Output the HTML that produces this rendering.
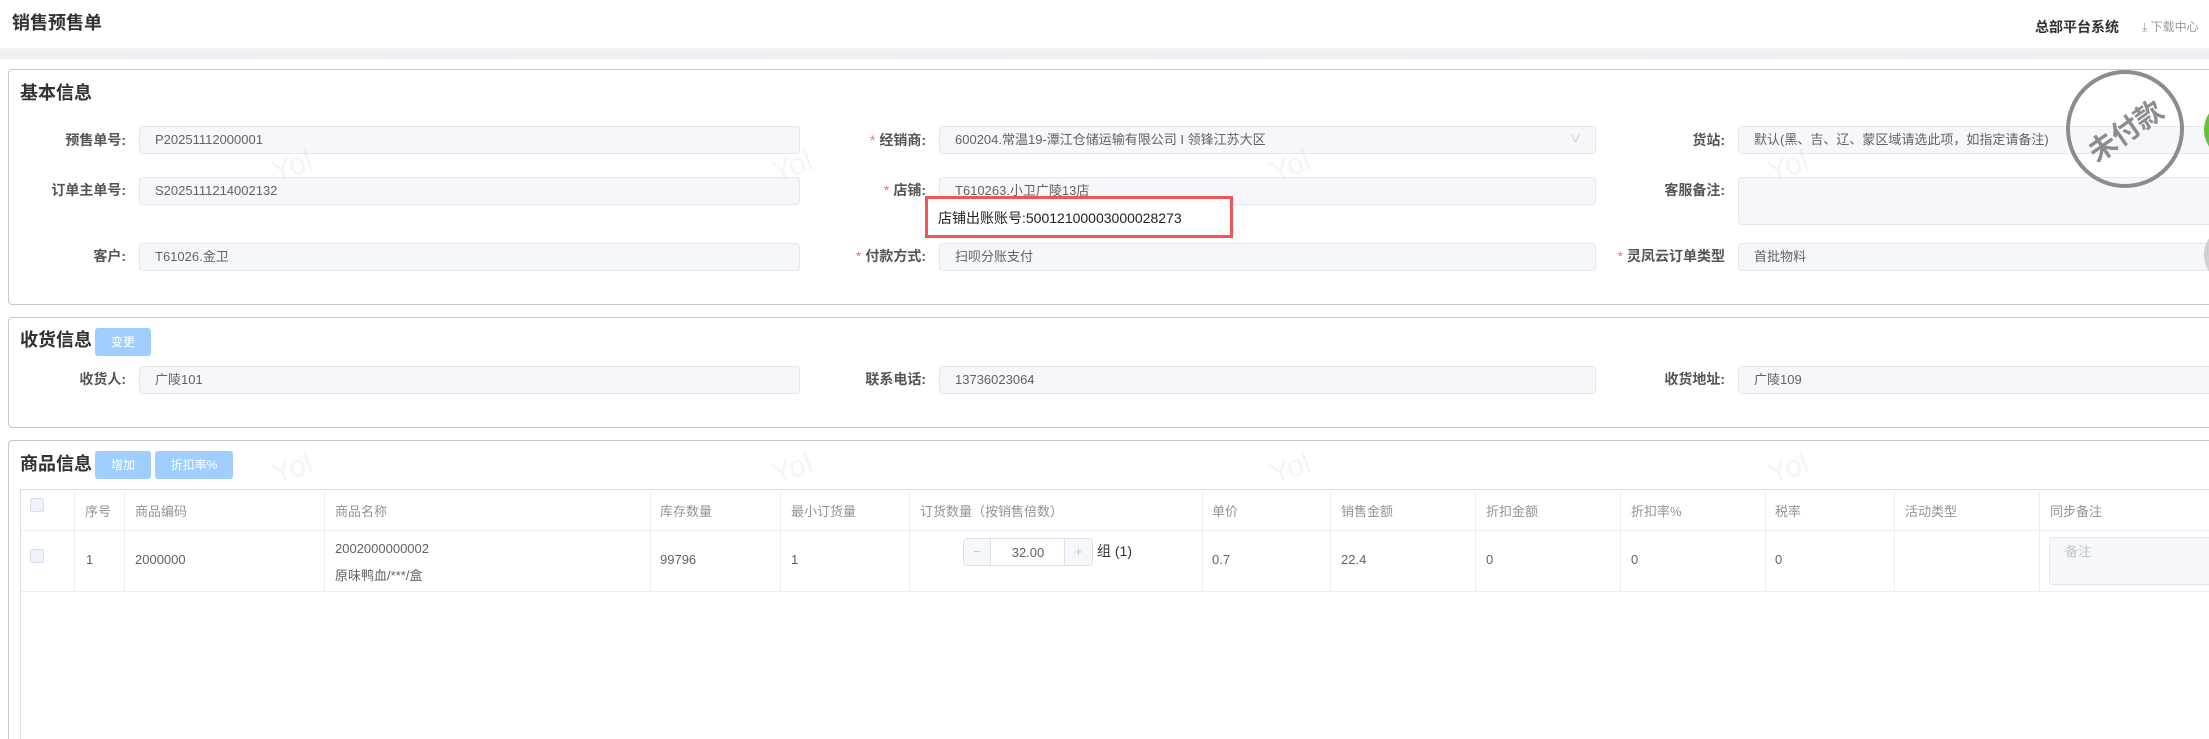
<!DOCTYPE html>
<html style="width:2209px;height:739px;overflow:hidden"><head><meta charset="utf-8"><style>
*{margin:0;padding:0;box-sizing:border-box}
body{width:2209px;height:739px;overflow:hidden;background:#fff;font-family:"Liberation Sans","Noto Sans CJK SC",sans-serif;position:relative;color:#606266}
.a{position:absolute;white-space:nowrap}
.lbl{position:absolute;font-size:14px;font-weight:bold;color:#555;text-align:right;width:200px;line-height:27px}
.lbl i{color:#f56c6c;font-style:normal;font-weight:normal;margin-right:4px}
.in{position:absolute;background:#f5f7fa;border:1px solid #e4e7ed;border-radius:4px;font-size:13px;color:#606266;padding-left:15px;line-height:25px;height:28px;white-space:nowrap;overflow:hidden}
.card{position:absolute;left:8px;width:2250px;border:1px solid #c8c8c8;border-radius:4px;background:#fff}
.h{position:absolute;font-size:18px;font-weight:bold;color:#303133;left:20px}
.btn{position:absolute;background:#a0cfff;color:#fff;font-size:12px;border-radius:3px;height:28px;line-height:28px;text-align:center}
.th{position:absolute;font-size:13px;color:#909399;top:501px}
.td{position:absolute;font-size:13px;color:#606266}
.vl{position:absolute;width:1px;background:#ebeef5;top:489px;height:102px}
.wm{position:absolute;font-size:30px;color:rgba(200,200,200,.18);transform:rotate(-20deg)}
.cb{position:absolute;width:14px;height:14px;border:1px solid #dcdfe6;background:#edf2fc;border-radius:2px}
</style></head><body>
<div class="a" style="left:12px;top:9px;font-size:18px;font-weight:bold;color:#303133">销售预售单</div>
<div class="a" style="left:2035px;top:17px;font-size:14px;font-weight:bold;color:#303133">总部平台系统</div>
<div class="a" style="left:2142px;top:18px;font-size:12px;color:#999">⤓ 下载中心</div>
<div class="a" style="left:0;top:48px;width:2209px;height:11px;background:linear-gradient(#f2f3f5,#eceef1)"></div>

<div class="card" style="top:69px;height:236px"></div>
<div class="h" style="top:79px">基本信息</div>
<div class="lbl" style="left:-74px;top:127px">预售单号:</div>
<div class="in" style="left:139px;top:126px;width:661px">P20251112000001</div>
<div class="lbl" style="left:-74px;top:177px">订单主单号:</div>
<div class="in" style="left:139px;top:177px;width:661px">S2025111214002132</div>
<div class="lbl" style="left:-74px;top:243px">客户:</div>
<div class="in" style="left:139px;top:243px;width:661px">T61026.金卫</div>

<div class="lbl" style="left:726px;top:127px"><i>*</i>经销商:</div>
<div class="in" style="left:939px;top:126px;width:657px">600204.常温19-潭江仓储运输有限公司 I 领锋江苏大区<span style="position:absolute;left:630px;color:#c0c4cc;font-size:11px">∨</span></div>
<div class="lbl" style="left:726px;top:177px"><i>*</i>店铺:</div>
<div class="in" style="left:939px;top:177px;width:657px">T610263.小卫广陵13店</div>
<div class="a" style="left:925px;top:196px;width:308px;height:42px;border:3px solid #f25555;background:#fff"></div>
<div class="a" style="left:938px;top:208px;font-size:14px;color:#222">店铺出账账号:50012100003000028273</div>
<div class="lbl" style="left:726px;top:243px"><i>*</i>付款方式:</div>
<div class="in" style="left:939px;top:243px;width:657px">扫呗分账支付</div>

<div class="lbl" style="left:1525px;top:127px">货站:</div>
<div class="in" style="left:1738px;top:126px;width:520px">默认(黑、吉、辽、蒙区域请选此项，如指定请备注)</div>
<div class="lbl" style="left:1525px;top:177px">客服备注:</div>
<div class="in" style="left:1738px;top:177px;width:520px;height:48px"></div>
<div class="lbl" style="left:1525px;top:243px"><i>*</i>灵凤云订单类型</div>
<div class="in" style="left:1738px;top:243px;width:520px">首批物料</div>

<div class="a" style="left:2066px;top:70px;width:118px;height:118px;border:4px solid #8c8c90;border-radius:50%"></div>
<div class="a" style="left:2080px;top:110px;font-size:28px;font-weight:bold;color:#8c8c90;transform:rotate(-35deg);width:90px;text-align:center">未付款</div>
<div class="a" style="left:2204px;top:100px;width:60px;height:60px;border-radius:50%;background:#67c23a"></div>
<div class="a" style="left:2204px;top:225px;width:60px;height:60px;border-radius:50%;background:#d0d0d0"></div>

<div class="card" style="top:317px;height:111px"></div>
<div class="h" style="top:326px">收货信息</div>
<div class="btn" style="left:95px;top:328px;width:56px">变更</div>
<div class="lbl" style="left:-74px;top:366px">收货人:</div>
<div class="in" style="left:139px;top:366px;width:661px">广陵101</div>
<div class="lbl" style="left:726px;top:366px">联系电话:</div>
<div class="in" style="left:939px;top:366px;width:657px">13736023064</div>
<div class="lbl" style="left:1525px;top:366px">收货地址:</div>
<div class="in" style="left:1738px;top:366px;width:520px">广陵109</div>

<div class="card" style="top:440px;height:310px;border-bottom:none"></div>
<div class="h" style="top:450px">商品信息</div>
<div class="btn" style="left:95px;top:451px;width:56px">增加</div>
<div class="btn" style="left:155px;top:451px;width:78px">折扣率%</div>

<div class="a" style="left:20px;top:489px;width:2240px;height:1px;background:#dcdfe6"></div>
<div class="a" style="left:20px;top:530px;width:2240px;height:1px;background:#ebeef5"></div>
<div class="a" style="left:20px;top:591px;width:2240px;height:1px;background:#ebeef5"></div>
<div class="vl" style="left:20px;height:250px;background:#dcdfe6"></div>
<div class="vl" style="left:74px"></div><div class="vl" style="left:124px"></div><div class="vl" style="left:324px"></div>
<div class="vl" style="left:650px"></div><div class="vl" style="left:780px"></div><div class="vl" style="left:909px"></div>
<div class="vl" style="left:1202px"></div><div class="vl" style="left:1330px"></div><div class="vl" style="left:1475px"></div>
<div class="vl" style="left:1620px"></div><div class="vl" style="left:1765px"></div><div class="vl" style="left:1894px"></div>
<div class="vl" style="left:2039px"></div>

<div class="cb" style="left:30px;top:498px"></div>
<div class="th" style="left:85px">序号</div>
<div class="th" style="left:135px">商品编码</div>
<div class="th" style="left:335px">商品名称</div>
<div class="th" style="left:660px">库存数量</div>
<div class="th" style="left:791px">最小订货量</div>
<div class="th" style="left:920px">订货数量（按销售倍数）</div>
<div class="th" style="left:1212px">单价</div>
<div class="th" style="left:1341px">销售金额</div>
<div class="th" style="left:1486px">折扣金额</div>
<div class="th" style="left:1631px">折扣率%</div>
<div class="th" style="left:1775px">税率</div>
<div class="th" style="left:1905px">活动类型</div>
<div class="th" style="left:2050px">同步备注</div>

<div class="cb" style="left:30px;top:549px"></div>
<div class="td" style="left:86px;top:552px">1</div>
<div class="td" style="left:135px;top:552px">2000000</div>
<div class="td" style="left:335px;top:541px">2002000000002</div>
<div class="td" style="left:335px;top:565px">原味鸭血/***/盒</div>
<div class="td" style="left:660px;top:552px">99796</div>
<div class="td" style="left:791px;top:552px">1</div>
<div class="a" style="left:963px;top:538px;width:130px;height:28px;border:1px solid #dcdfe6;border-radius:4px;background:#fff"></div>
<div class="a" style="left:964px;top:539px;width:27px;height:26px;background:#f5f7fa;border-right:1px solid #dcdfe6;color:#c0c4cc;text-align:center;line-height:26px;font-size:13px">−</div>
<div class="a" style="left:1064px;top:539px;width:28px;height:26px;background:#f5f7fa;border-left:1px solid #dcdfe6;color:#c0c4cc;text-align:center;line-height:26px;font-size:13px">+</div>
<div class="td" style="left:992px;top:545px;width:72px;text-align:center">32.00</div>
<div class="a" style="left:1097px;top:541px;font-size:14px;color:#303133">组 (1)</div>
<div class="td" style="left:1212px;top:552px">0.7</div>
<div class="td" style="left:1341px;top:552px">22.4</div>
<div class="td" style="left:1486px;top:552px">0</div>
<div class="td" style="left:1631px;top:552px">0</div>
<div class="td" style="left:1775px;top:552px">0</div>
<div class="in" style="left:2049px;top:537px;width:200px;height:48px;color:#c0c4cc;line-height:28px">备注</div>

<div class="wm" style="left:272px;top:150px">Yol</div>
<div class="wm" style="left:772px;top:150px">Yol</div>
<div class="wm" style="left:1270px;top:150px">Yol</div>
<div class="wm" style="left:1768px;top:150px">Yol</div>
<div class="wm" style="left:272px;top:452px">Yol</div>
<div class="wm" style="left:772px;top:452px">Yol</div>
<div class="wm" style="left:1270px;top:452px">Yol</div>
<div class="wm" style="left:1768px;top:452px">Yol</div>
</body></html>
